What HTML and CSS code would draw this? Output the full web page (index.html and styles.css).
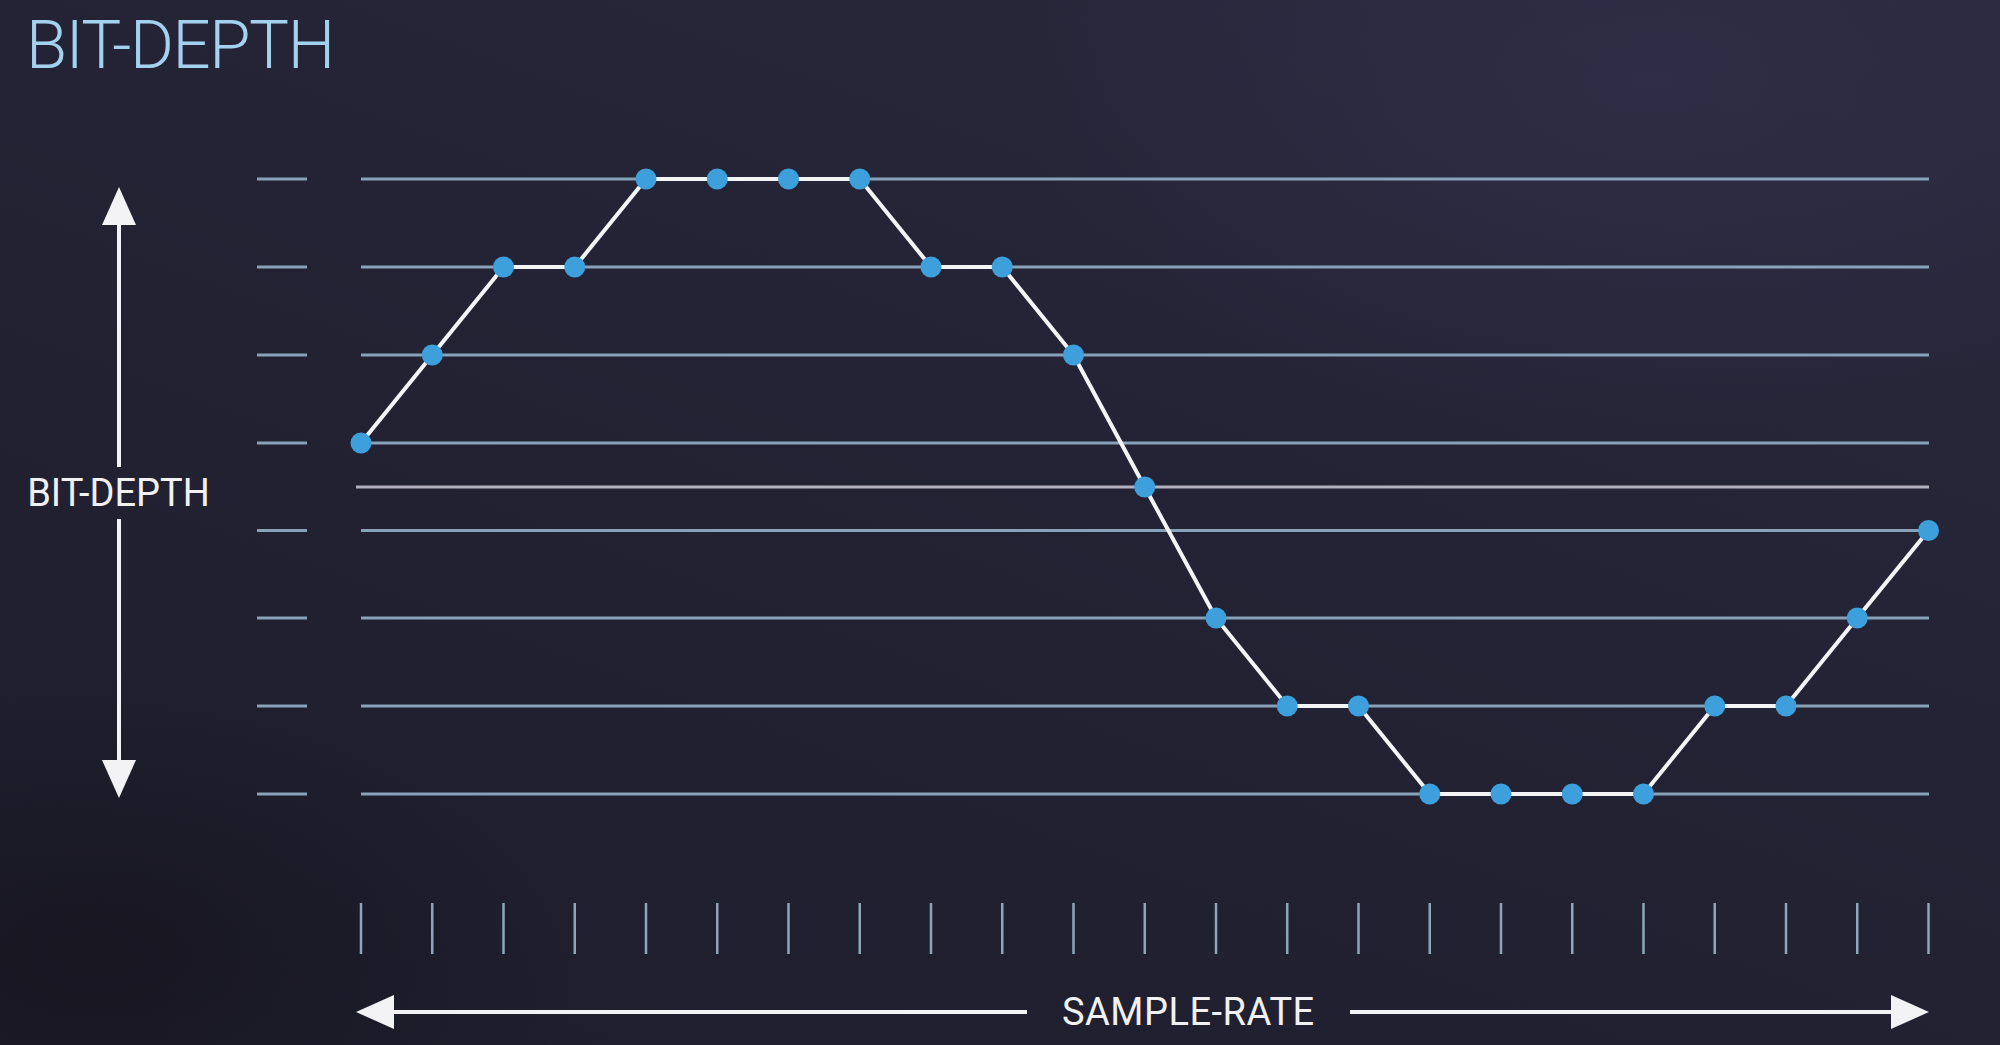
FILE: index.html
```html
<!DOCTYPE html>
<html lang="en">
<head>
<meta charset="utf-8">
<title>Bit-Depth</title>
<link rel="stylesheet" href="styles.css">
</head>
<body>
<div class="page">
  <h1 class="title">BIT-DEPTH</h1>
  <div class="main">
    <div class="vaxis">
      <svg class="head-v" width="34" height="38" viewBox="0 0 34 38"><polygon points="17,0 34,38 0,38"/></svg>
      <div class="vshaft"></div>
      <div class="vlabel">BIT-DEPTH</div>
      <div class="vshaft"></div>
      <svg class="head-v" width="34" height="38" viewBox="0 0 34 38"><polygon points="0,0 34,0 17,38"/></svg>
    </div>
    <svg class="chart" width="1713" height="810" viewBox="237 160 1713 810">
      <g class="lticks">
        <line x1="257" y1="179" x2="307" y2="179"/>
        <line x1="257" y1="267" x2="307" y2="267"/>
        <line x1="257" y1="355" x2="307" y2="355"/>
        <line x1="257" y1="443" x2="307" y2="443"/>
        <line x1="257" y1="530.5" x2="307" y2="530.5"/>
        <line x1="257" y1="618" x2="307" y2="618"/>
        <line x1="257" y1="706" x2="307" y2="706"/>
        <line x1="257" y1="794" x2="307" y2="794"/>
      </g>
      <g class="grid">
        <line x1="361" y1="179" x2="1929" y2="179"/>
        <line x1="361" y1="267" x2="1929" y2="267"/>
        <line x1="361" y1="355" x2="1929" y2="355"/>
        <line x1="361" y1="443" x2="1929" y2="443"/>
        <line x1="361" y1="530.5" x2="1929" y2="530.5"/>
        <line x1="361" y1="618" x2="1929" y2="618"/>
        <line x1="361" y1="706" x2="1929" y2="706"/>
        <line x1="361" y1="794" x2="1929" y2="794"/>
      </g>
      <line class="zero" x1="356" y1="487" x2="1929" y2="487"/>
      <g class="bticks">
        <line x1="361" y1="903" x2="361" y2="954"/>
        <line x1="432.25" y1="903" x2="432.25" y2="954"/>
        <line x1="503.5" y1="903" x2="503.5" y2="954"/>
        <line x1="574.75" y1="903" x2="574.75" y2="954"/>
        <line x1="646" y1="903" x2="646" y2="954"/>
        <line x1="717.25" y1="903" x2="717.25" y2="954"/>
        <line x1="788.5" y1="903" x2="788.5" y2="954"/>
        <line x1="859.75" y1="903" x2="859.75" y2="954"/>
        <line x1="931" y1="903" x2="931" y2="954"/>
        <line x1="1002.25" y1="903" x2="1002.25" y2="954"/>
        <line x1="1073.5" y1="903" x2="1073.5" y2="954"/>
        <line x1="1144.75" y1="903" x2="1144.75" y2="954"/>
        <line x1="1216" y1="903" x2="1216" y2="954"/>
        <line x1="1287.25" y1="903" x2="1287.25" y2="954"/>
        <line x1="1358.5" y1="903" x2="1358.5" y2="954"/>
        <line x1="1429.75" y1="903" x2="1429.75" y2="954"/>
        <line x1="1501" y1="903" x2="1501" y2="954"/>
        <line x1="1572.25" y1="903" x2="1572.25" y2="954"/>
        <line x1="1643.5" y1="903" x2="1643.5" y2="954"/>
        <line x1="1714.75" y1="903" x2="1714.75" y2="954"/>
        <line x1="1786" y1="903" x2="1786" y2="954"/>
        <line x1="1857.25" y1="903" x2="1857.25" y2="954"/>
        <line x1="1928.5" y1="903" x2="1928.5" y2="954"/>
      </g>
      <polyline class="wave" points="361,443 432.25,355 503.5,267 574.75,267 646,179 717.25,179 788.5,179 859.75,179 931,267 1002.25,267 1073.5,355 1144.75,487 1216,618 1287.25,706 1358.5,706 1429.75,794 1501,794 1572.25,794 1643.5,794 1714.75,706 1786,706 1857.25,618 1928.5,530.5"/>
      <g class="dots">
        <circle cx="361" cy="443" r="10.5"/>
        <circle cx="432.25" cy="355" r="10.5"/>
        <circle cx="503.5" cy="267" r="10.5"/>
        <circle cx="574.75" cy="267" r="10.5"/>
        <circle cx="646" cy="179" r="10.5"/>
        <circle cx="717.25" cy="179" r="10.5"/>
        <circle cx="788.5" cy="179" r="10.5"/>
        <circle cx="859.75" cy="179" r="10.5"/>
        <circle cx="931" cy="267" r="10.5"/>
        <circle cx="1002.25" cy="267" r="10.5"/>
        <circle cx="1073.5" cy="355" r="10.5"/>
        <circle cx="1144.75" cy="487" r="10.5"/>
        <circle cx="1216" cy="618" r="10.5"/>
        <circle cx="1287.25" cy="706" r="10.5"/>
        <circle cx="1358.5" cy="706" r="10.5"/>
        <circle cx="1429.75" cy="794" r="10.5"/>
        <circle cx="1501" cy="794" r="10.5"/>
        <circle cx="1572.25" cy="794" r="10.5"/>
        <circle cx="1643.5" cy="794" r="10.5"/>
        <circle cx="1714.75" cy="706" r="10.5"/>
        <circle cx="1786" cy="706" r="10.5"/>
        <circle cx="1857.25" cy="618" r="10.5"/>
        <circle cx="1928.5" cy="530.5" r="10.5"/>
      </g>
    </svg>
  </div>
  <div class="haxis">
    <svg class="head-h" width="38" height="34" viewBox="0 0 38 34"><polygon points="0,17 38,0 38,34"/></svg>
    <div class="hline hline-left"></div>
    <div class="hlabel">SAMPLE-RATE</div>
    <div class="hline hline-right"></div>
    <svg class="head-h" width="38" height="34" viewBox="0 0 38 34"><polygon points="0,0 38,17 0,34"/></svg>
  </div>
</div>
</body>
</html>
```
FILE: styles.css
```css
html, body {
  margin: 0;
  padding: 0;
}

body {
  width: 2000px;
  height: 1045px;
  overflow: hidden;
  background: #232233;
  font-family: Roboto, "Liberation Sans", sans-serif;
}

.page {
  width: 2000px;
  height: 1045px;
  box-sizing: border-box;
  background:
    radial-gradient(ellipse 900px 500px at 1650px 80px, rgba(52, 50, 78, 0.55), rgba(52, 50, 78, 0) 70%),
    radial-gradient(ellipse 700px 400px at 100px 950px, rgba(18, 17, 26, 0.6), rgba(18, 17, 26, 0) 70%),
    linear-gradient(200deg, #2a293d 0%, #242335 45%, #1e1d2b 100%);
  display: flex;
  flex-direction: column;
}

.title {
  margin: 0;
  height: 160px;
  box-sizing: border-box;
  padding: 12px 0 0 26px;
  font-family: Roboto, "Liberation Sans", sans-serif;
  font-weight: 300;
  font-size: 67px;
  line-height: 1;
  letter-spacing: -1.4px;
  color: #a4d2ee;
}

.main {
  display: flex;
  height: 810px;
}

.vaxis {
  width: 237px;
  height: 611px;
  margin-top: 27px;
  display: flex;
  flex-direction: column;
  align-items: center;
  flex: none;
}

.head-v,
.head-h {
  display: block;
  flex: none;
  fill: #f3f3f5;
}

.vshaft {
  flex: 1;
  width: 4px;
  background: #f3f3f5;
}

.vlabel {
  height: 52px;
  line-height: 52px;
  font-size: 38px;
  letter-spacing: 0;
  color: #f1f1f3;
  white-space: nowrap;
}

.chart {
  display: block;
  flex: none;
}

.lticks line,
.grid line {
  stroke: #88a2b8;
  stroke-width: 3;
}

.zero {
  stroke: #b3b1c0;
  stroke-width: 3;
}

.bticks line {
  stroke: #8ea6bb;
  stroke-width: 2.5;
}

.wave {
  fill: none;
  stroke: #f4f4f6;
  stroke-width: 4;
  stroke-linejoin: round;
}

.dots circle {
  fill: #3d9fdc;
}

.haxis {
  display: flex;
  align-items: center;
  width: 1573px;
  height: 40px;
  margin: 22px 0 0 356px;
}

.hline {
  height: 4px;
  background: #f3f3f5;
}

.hline-left {
  width: 633px;
  flex: none;
}

.hline-right {
  flex: 1;
}

.hlabel {
  margin: 0 35px;
  font-size: 38px;
  line-height: 40px;
  letter-spacing: 0.5px;
  color: #f1f1f3;
  white-space: nowrap;
}
```
